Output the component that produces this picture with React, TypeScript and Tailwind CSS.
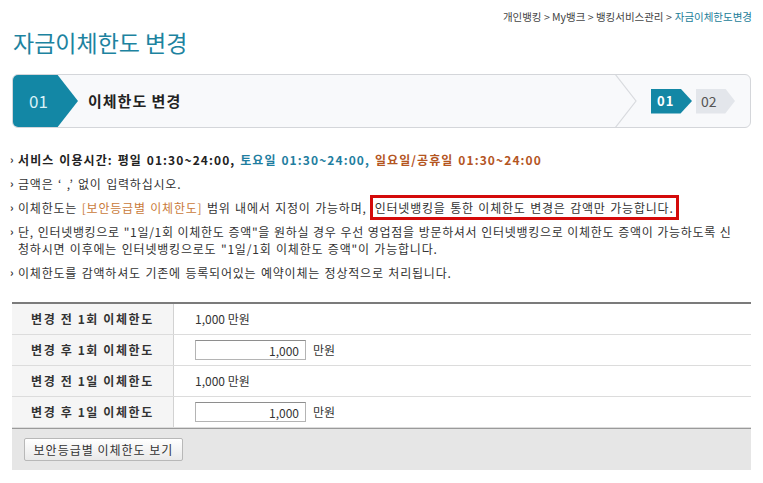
import React from "react";

const FONT = { fontFamily: '"Noto Sans CJK KR", "Noto Sans", sans-serif' };

function Bullet({ children }: { children: React.ReactNode }) {
  return (
    <li className="flex">
      <span className="w-[8px] shrink-0 text-[11px] font-bold text-[#333]">›</span>
      <div className="flex-1 whitespace-nowrap">{children}</div>
    </li>
  );
}

const rows = [
  { label: "변경 전 1회 이체한도", input: false },
  { label: "변경 후 1회 이체한도", input: true },
  { label: "변경 전 1일 이체한도", input: false },
  { label: "변경 후 1일 이체한도", input: true },
];

export default function App() {
  return (
    <div className="w-[763px] h-[483px] bg-white text-[#333] overflow-hidden" style={FONT}>
      {/* breadcrumb */}
      <div className="flex justify-end pt-[10px] pr-[11px] text-[10.5px] leading-[14px] text-[#444]">
        <span>개인뱅킹 &gt; My뱅크 &gt; 뱅킹서비스관리 &gt; </span>
        <span className="ml-[3px] text-[#1b7d99]">자금이체한도변경</span>
      </div>

      <h1 className="mt-[3px] pl-[13px] text-[23px] leading-[30px] font-normal text-[#1d83a0]">
        자금이체한도 변경
      </h1>

      {/* step box */}
      <div className="mt-[17px] mx-[12px] h-[54px] rounded-[6px] border border-[#d4d6da] bg-[#f8f9fb] flex items-stretch overflow-hidden">
        <div className="w-[66px] -ml-px -my-px rounded-l-[6px] bg-[#1387a5] flex items-center pl-[17px] text-[17px] text-[#d8f1f7] [clip-path:polygon(0_0,68%_0,100%_50%,68%_100%,0_100%)]">
          01
        </div>
        <div className="ml-[10px] flex items-center text-[15px] font-bold tracking-[1px] text-[#222]">
          이체한도 변경
        </div>
        <div className="flex-1" />
        <svg width="22" height="54" viewBox="0 0 22 54" className="shrink-0 -my-px">
          <polyline points="0,0 21,27 0,54" fill="none" stroke="#d9dbdf" strokeWidth="1.2" />
        </svg>
        <div className="flex items-center ml-[14px] mr-[15px]">
          <div className="w-[41px] h-[25px] bg-[#1387a5] flex items-center pl-[6px] text-[13px] font-bold tracking-[1px] text-white [clip-path:polygon(0_0,72%_0,100%_50%,72%_100%,0_100%)]">
            01
          </div>
          <div className="ml-[4px] w-[39px] h-[25px] bg-[#e3e6eb] flex items-center pl-[5px] text-[14px] text-[#555] [clip-path:polygon(0_0,75%_0,100%_50%,75%_100%,0_100%)]">
            02
          </div>
        </div>
      </div>

      {/* notes */}
      <ul className="mt-[23px] pl-[10px] pr-[10px] text-[12px] leading-[17px] flex flex-col gap-[7px] tracking-[0.8px] [word-spacing:1px]">
        <Bullet>
          <span className="font-bold text-[#222] tracking-[1.1px]">서비스 이용시간: 평일 01:30~24:00, </span>
          <span className="font-bold text-[#1f7ea0] tracking-[1.1px]">토요일 01:30~24:00, </span>
          <span className="font-bold text-[#b4551f] tracking-[1.1px]">일요일/공휴일 01:30~24:00</span>
        </Bullet>
        <Bullet>금액은 ‘ ,’ 없이 입력하십시오.</Bullet>
        <Bullet>
          이체한도는 <span className="text-[#c97a3a]">[보안등급별 이체한도]</span> 범위 내에서 지정이 가능하며,
          <span className="ml-[3px] border-[3px] border-[#d40a0a] px-[2px] py-[1px]">
            인터넷뱅킹을 통한 이체한도 변경은 감액만 가능합니다.
          </span>
        </Bullet>
        <Bullet>
          <span className="tracking-[0.7px] [word-spacing:0.5px]">
            단, 인터넷뱅킹으로 "1일/1회 이체한도 증액"을 원하실 경우 우선 영업점을 방문하셔서 인터넷뱅킹으로 이체한도 증액이 가능하도록 신
          </span>
          <br />
          청하시면 이후에는 인터넷뱅킹으로도 "1일/1회 이체한도 증액"이 가능합니다.
        </Bullet>
        <Bullet>이체한도를 감액하셔도 기존에 등록되어있는 예약이체는 정상적으로 처리됩니다.</Bullet>
      </ul>

      {/* table */}
      <div className="mt-[21px] mx-[12px] border-t-2 border-[#7b7b7b] text-[12px]">
        {rows.map((r) => (
          <div key={r.label} className="grid grid-cols-[162px_1fr] h-[31px] border-b border-[#dcdcdc] last:border-b-0">
            <div className="bg-[#f5f5f5] border-r border-[#d2d2d2] flex items-center justify-center font-bold tracking-[1.6px] text-[#333]">
              {r.label}
            </div>
            <div className="flex items-center pl-[21px] text-[#333]">
              {r.input ? (
                <>
                  <input
                    readOnly
                    value="1,000"
                    className="w-[111px] h-[20px] border border-[#b4b4b4] border-t-[#8e8e8e] text-right pr-[6px] text-[12px] text-[#333] outline-none"
                    style={FONT}
                  />
                  <span className="ml-[7px]">만원</span>
                </>
              ) : (
                <span>1,000 만원</span>
              )}
            </div>
          </div>
        ))}
        <div className="h-[42px] bg-[#e6e6e6] border-t border-[#9a9a9a] flex items-center pl-[12px]">
          <button className="w-[159px] h-[23px] rounded-[2px] border border-[#b8b8b8] bg-gradient-to-b from-white to-[#e9e9e9] text-[12px] tracking-[1px] text-[#333]">
            보안등급별 이체한도 보기
          </button>
        </div>
      </div>
    </div>
  );
}
